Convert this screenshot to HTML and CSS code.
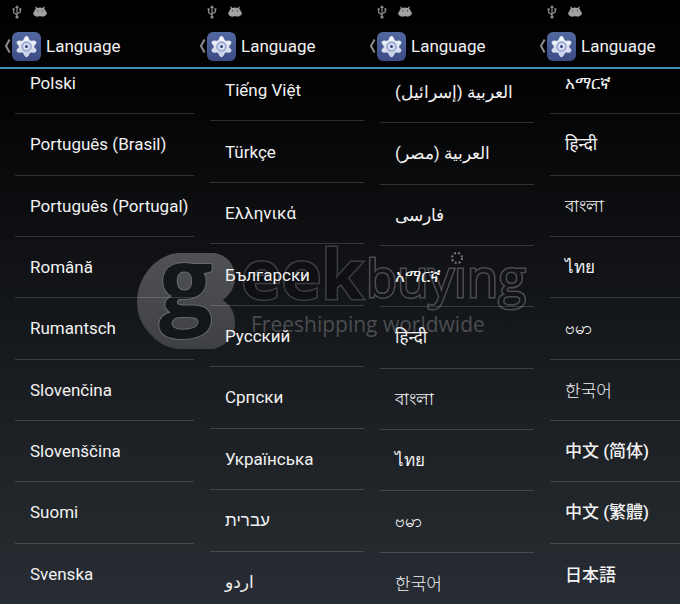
FILE: index.html
```html
<!DOCTYPE html>
<html lang="en">
<head>
  <meta charset="UTF-8" />
  <meta name="viewport" content="width=device-width, initial-scale=1.0"/>
  <title>Language</title>
  <link rel="stylesheet" href="styles.css">
</head>
<body>

  <!-- shared icons -->
  <svg class="defs" width="0" height="0" aria-hidden="true">
    <defs>
      <linearGradient id="tile" x1="0" y1="0" x2="0" y2="1">
        <stop offset="0" stop-color="#51689f"/>
        <stop offset="1" stop-color="#3d4c86"/>
      </linearGradient>
      <linearGradient id="gear" x1="0" y1="0" x2="0" y2="1">
        <stop offset="0" stop-color="#ffffff"/>
        <stop offset="1" stop-color="#c5cee6"/>
      </linearGradient>
    </defs>
    <symbol id="usb" viewBox="0 0 10 14">
      <g fill="none" stroke="#8c8c8c" stroke-width="1.2">
        <path d="M5 12V2M5 10L1.6 7.4V4.5M5 9L8.4 6.8V4.5"/>
      </g>
      <path d="M5 0L7 3H3zM.6 3.2h2v2h-2zM7.4 3.2h2v2h-2z" fill="#8c8c8c"/>
      <circle cx="5" cy="12" r="1.6" fill="#8c8c8c"/>
    </symbol>
    <symbol id="droid" viewBox="0 0 14 12">
      <path d="M2.4.8L3.2.6L4.2 2Q7 1.2 9.8 2L11 .4L11.8.8L11.2 2.8Q12.8 4.2 12.9 5.6Q14 6.2 13.8 7.8Q13.6 9.4 12.2 9.6Q11 11 9 10.6L8.4 10.2H5.6L5 10.8Q3 11 1.8 9.8Q.2 9.4 .2 7.8Q.2 6 1.3 5.6Q1.4 4 2.8 2.8z" fill="#a2a2a2"/>
      <circle cx="4.8" cy="4.8" r=".6" fill="#222"/>
      <circle cx="9.4" cy="4.8" r=".6" fill="#222"/>
    </symbol>
    <symbol id="chevron" viewBox="0 0 7 14">
      <path d="M5.6.6L2 7L5.6 13.4" fill="none" stroke="#8d8d8d" stroke-width="2"/>
    </symbol>
    <symbol id="settings" viewBox="0 0 29 29">
      <rect width="29" height="29" rx="6" fill="url(#tile)"/>
      <path d="M12.6 6l1-1.4h1.8l1 1.4l.8 2.2l2 1.1l2.4-.4l1.6.2l.9 1.6l-.7 1.5l-1.5 1.6v1.6l1.5 1.6l.7 1.5l-.9 1.6l-1.6.2l-2.4-.4l-2 1.1l-.8 2.2l-1 1.4h-1.8l-1-1.4l-.8-2.2l-2-1.1l-2.4.4l-1.6-.2l-.9-1.6l.7-1.5l1.5-1.6v-1.6l-1.5-1.6l-.7-1.5l.9-1.6l1.6-.2l2.4.4l2-1.1z" fill="url(#gear)" stroke="#e6ebf7" stroke-width=".8" stroke-linejoin="round"/>
      <circle cx="14.5" cy="14.6" r="5" fill="#aab6da" stroke="#98a5cd" stroke-width=".8"/>
      <circle cx="14.5" cy="14.6" r="3.2" fill="#dfe5f4"/>
      <circle cx="14.5" cy="14.6" r="1.5" fill="#33437c"/>
    </symbol>
  </svg>

  <main class="screens">
    <section class="screen">
      <div class="status">
        <svg class="usb"><use href="#usb"/></svg>
        <svg class="droid"><use href="#droid"/></svg>
      </div>
      <button class="title"><svg class="chevron"><use href="#chevron"/></svg><svg class="settings"><use href="#settings"/></svg>Language</button>
      <div class="viewport">
        <ul class="list">
          <li><a href="#">Polski</a></li>
          <li><a href="#">Português (Brasil)</a></li>
          <li><a href="#">Português (Portugal)</a></li>
          <li><a href="#">Română</a></li>
          <li><a href="#">Rumantsch</a></li>
          <li><a href="#">Slovenčina</a></li>
          <li><a href="#">Slovenščina</a></li>
          <li><a href="#">Suomi</a></li>
          <li><a href="#">Svenska</a></li>
        </ul>
      </div>
    </section>

    <section class="screen">
      <div class="status">
        <svg class="usb"><use href="#usb"/></svg>
        <svg class="droid"><use href="#droid"/></svg>
      </div>
      <button class="title"><svg class="chevron"><use href="#chevron"/></svg><svg class="settings"><use href="#settings"/></svg>Language</button>
      <div class="viewport">
        <ul class="list scroll-mid">
          <li><a href="#">Tiếng Việt</a></li>
          <li><a href="#">Türkçe</a></li>
          <li><a href="#">Ελληνικά</a></li>
          <li><a href="#">Български</a></li>
          <li><a href="#">Русский</a></li>
          <li><a href="#">Српски</a></li>
          <li><a href="#">Українська</a></li>
          <li><a href="#"><bdi lang="he">עברית</bdi></a></li>
          <li><a href="#"><bdi lang="ur">اردو</bdi></a></li>
        </ul>
      </div>
    </section>

    <section class="screen">
      <div class="status">
        <svg class="usb"><use href="#usb"/></svg>
        <svg class="droid"><use href="#droid"/></svg>
      </div>
      <button class="title"><svg class="chevron"><use href="#chevron"/></svg><svg class="settings"><use href="#settings"/></svg>Language</button>
      <div class="viewport">
        <ul class="list scroll-low">
          <li><a href="#"><bdi lang="ar">العربية (إسرائيل)</bdi></a></li>
          <li><a href="#"><bdi lang="ar">العربية (مصر)</bdi></a></li>
          <li><a href="#"><bdi lang="fa">فارسی</bdi></a></li>
          <li><a href="#" lang="am">አማርኛ</a></li>
          <li><a href="#" lang="hi">हिन्दी</a></li>
          <li><a href="#" lang="bn">বাংলা</a></li>
          <li><a href="#" lang="th">ไทย</a></li>
          <li><a href="#" lang="my">ဗမာ</a></li>
          <li><a href="#" lang="ko">한국어</a></li>
        </ul>
      </div>
    </section>

    <section class="screen">
      <div class="status">
        <svg class="usb"><use href="#usb"/></svg>
        <svg class="droid"><use href="#droid"/></svg>
      </div>
      <button class="title"><svg class="chevron"><use href="#chevron"/></svg><svg class="settings"><use href="#settings"/></svg>Language</button>
      <div class="viewport">
        <ul class="list">
          <li><a href="#" lang="am">አማርኛ</a></li>
          <li><a href="#" lang="hi">हिन्दी</a></li>
          <li><a href="#" lang="bn">বাংলা</a></li>
          <li><a href="#" lang="th">ไทย</a></li>
          <li><a href="#" lang="my">ဗမာ</a></li>
          <li><a href="#" lang="ko">한국어</a></li>
          <li><a href="#" lang="zh-Hans">中文 (简体)</a></li>
          <li><a href="#" lang="zh-Hant">中文 (繁體)</a></li>
          <li><a href="#" lang="ja">日本語</a></li>
        </ul>
      </div>
    </section>

    <svg class="watermark" viewBox="0 0 394 112">
      <defs>
        <linearGradient id="blob" x1="0" y1="0" x2="0" y2="1">
          <stop offset="0" stop-color="#505154"/>
          <stop offset="1" stop-color="#3e4043"/>
        </linearGradient>
      </defs>
      <path d="M40 8H78Q97 12 98 33Q98 46 86 55Q99 64 98 80Q96 98 77 104H40Q24 102 12 88Q0 75 0 57Q0 38 12 24Q24 10 40 8z" fill="url(#blob)"/>
      <text class="mark-g" x="22" y="71">g</text>
      <text class="mark-eek" x="104" y="54">eek</text>
      <text class="mark-buying" x="229" y="52">buyıng</text>
      <circle class="mark-dot" cx="320" cy="13" r="5"/>
      <text class="mark-slogan" x="114" y="87">Freeshipping worldwide</text>
    </svg>
  </main>

</body>
</html>
```

FILE: styles.css
```css
* { box-sizing: border-box; }
body {
  margin: 0;
  background: #000;
  color: #f2f2f2;
  font-family: Roboto, "Noto Sans", "Noto Sans CJK SC", sans-serif;
}
.defs { position: absolute; }
.screens {
  position: relative;
  display: grid;
  grid-template-columns: 195fr 170fr 170fr 145fr;
  height: 100vh;
  min-height: 480px;
  overflow: hidden;
  background: linear-gradient(#000 0, #030304 15%, #111316 45%, #1c2024 70%, #23282c 88%, #282c35 100%);
}
.screen {
  display: flex;
  flex-direction: column;
  min-width: 0;
  min-height: 0;
}
.status {
  display: flex;
  align-items: center;
  gap: 11px;
  height: 24px;
  padding-left: 12px;
  background: #000;
}
.usb { width: 10px; height: 14px; }
.droid { width: 14px; height: 12px; }
.title {
  display: flex;
  align-items: center;
  flex: none;
  height: 45px;
  padding: 1px 0 0 4px;
  border: none;
  border-bottom: 2px solid #3d8fb3;
  background: #020203;
  color: #f2f2f2;
  font: 17px Roboto, sans-serif;
  white-space: nowrap;
  cursor: pointer;
}
.chevron { width: 7px; height: 14px; margin-right: 1px; }
.settings { width: 29px; height: 29px; margin-right: 5px; }

/* each list is caught part way through a scroll */
.viewport {
  display: flex;
  flex: 1;
  min-height: 0;
  overflow: hidden;
}
.list {
  position: relative;
  z-index: 1;
  display: flex;
  flex-direction: column;
  flex: 1;
  min-width: 0;
  margin: -16px 1px 0 15px;
  padding: 0;
  list-style: none;
}
.scroll-mid { margin-top: -9px; margin-bottom: -8px; }
.scroll-low { margin-top: -7px; margin-bottom: -9px; }
.screen:nth-child(4) .list { margin-right: 0; }
.list li {
  display: flex;
  flex: 1;
  min-height: 0;
  border-bottom: 1px solid rgba(255, 255, 255, 0.16);
}
.list li:last-child { border-bottom: none; }
.list a {
  display: flex;
  align-items: center;
  flex: 1;
  padding: 0 0 0 15px;
  color: inherit;
  font-size: 17px;
  line-height: 24px;
  text-decoration: none;
  white-space: nowrap;
}
a:lang(ko) { font-family: "Noto Sans CJK KR", sans-serif; font-weight: 300; }
a:lang(ja) { font-family: "Noto Sans CJK JP", sans-serif; font-weight: 500; }
a:lang(zh-Hans) { font-family: Roboto, "Noto Sans CJK SC", sans-serif; font-weight: 500; }
a:lang(zh-Hant) { font-family: Roboto, "Noto Sans CJK TC", sans-serif; font-weight: 500; }
bdi:lang(ur) { font-family: "DejaVu Sans", sans-serif; }

.watermark {
  position: absolute;
  top: 245px;
  left: 137px;
  width: 394px;
  height: 112px;
  overflow: visible;
  pointer-events: none;
}
.watermark text {
  font-family: "Open Sans", sans-serif;
  paint-order: stroke;
}
.watermark .mark-g {
  font-size: 95px;
  font-weight: 700;
  fill: #14171a;
  stroke: #67696c;
  stroke-width: 2;
}
.watermark .mark-eek {
  font-size: 68px;
  font-weight: 700;
  fill: #0e1013;
  stroke: #3c3e41;
  stroke-width: 3;
}
.watermark .mark-buying {
  font-size: 51px;
  font-weight: 400;
  fill: #121417;
  stroke: #4a4c4f;
  stroke-width: 3;
}
.mark-dot { fill: none; stroke: #77797b; stroke-width: 2; stroke-dasharray: 2 2; }
.watermark .mark-slogan { font-size: 21px; fill: #4b4d50; }
```
